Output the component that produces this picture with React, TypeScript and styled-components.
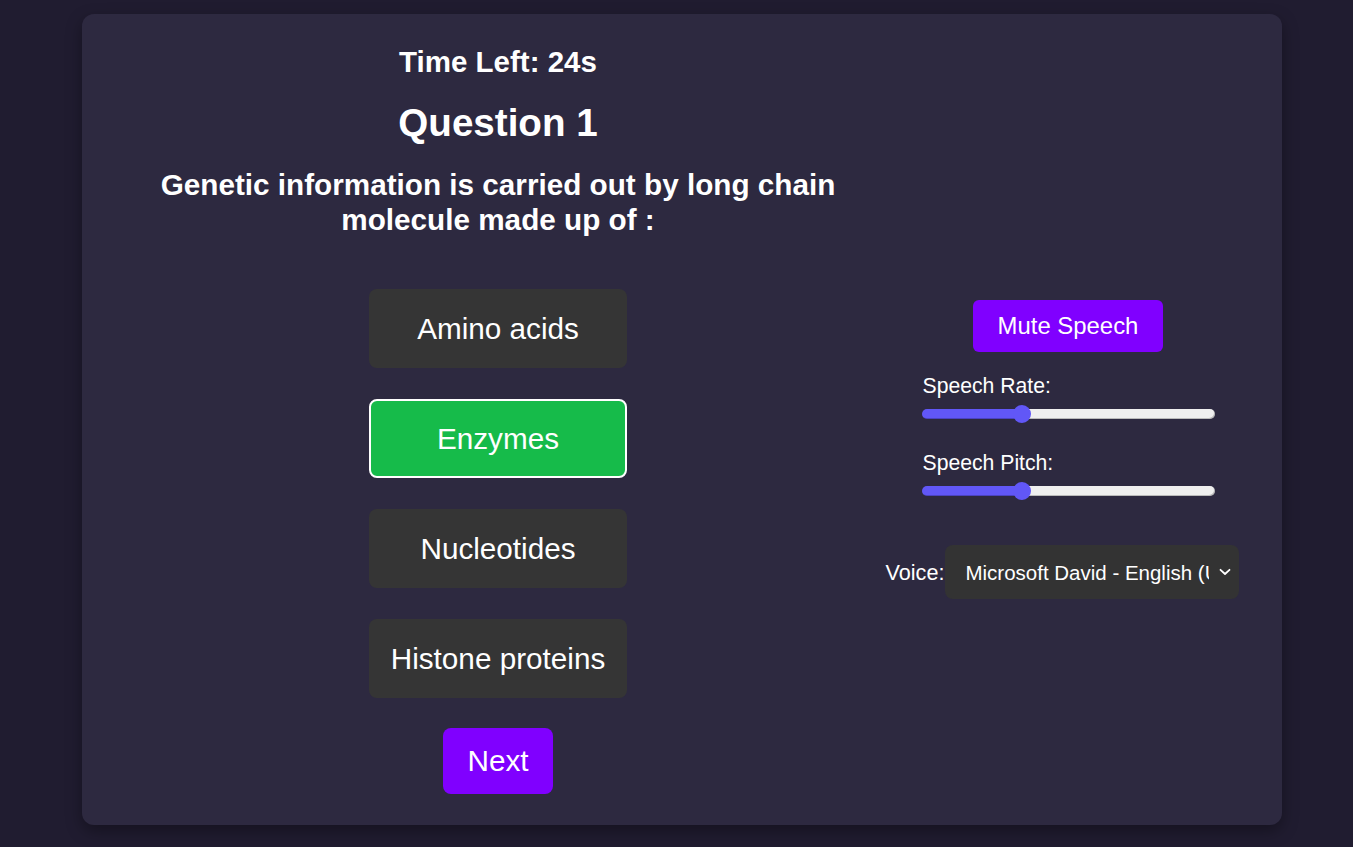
import React, { useState } from "react";
import styled, { createGlobalStyle } from "styled-components";

const GlobalStyle = createGlobalStyle`
  html, body {
    margin: 0;
    padding: 0;
    background: #201c30;
    font-family: "Liberation Sans", Arial, sans-serif;
    color: #ffffff;
  }
  * { box-sizing: border-box; }
`;

const Page = styled.div`
  min-height: 847px;
  padding: 14px 0 22px 82px;
`;

const Card = styled.div`
  width: 1200px;
  height: 811px;
  background: #2d2940;
  border-radius: 12px;
  box-shadow: 0 6px 16px rgba(0, 0, 0, 0.35);
  display: grid;
  grid-template-columns: 792px 348px;
  padding-left: 20px;
`;

const LeftColumn = styled.div`
  display: flex;
  flex-direction: column;
  align-items: center;
  padding-top: 31px;
`;

const Timer = styled.div`
  font-size: 29.5px;
  line-height: 34px;
  font-weight: 700;
`;

const QuestionTitle = styled.h2`
  margin: 22px 0 0;
  font-size: 38.6px;
  line-height: 44px;
  font-weight: 700;
`;

const QuestionText = styled.p`
  margin: 22px 0 0;
  font-size: 29.7px;
  line-height: 35px;
  font-weight: 700;
  text-align: center;
`;

const Answers = styled.div`
  margin-top: 52px;
  display: flex;
  flex-direction: column;
  gap: 31px;
`;

const AnswerButton = styled.button<{ $selected?: boolean }>`
  width: 258px;
  height: 79px;
  border-radius: 8px;
  border: ${(p) => (p.$selected ? "2px solid #ffffff" : "none")};
  background: ${(p) => (p.$selected ? "#16bb4a" : "#353535")};
  color: #ffffff;
  font-family: "Liberation Sans", Arial, sans-serif;
  font-size: 29.7px;
  line-height: 34px;
  padding: 0;
  cursor: pointer;
`;

const NextButton = styled.button`
  margin-top: 30px;
  height: 66px;
  padding: 0 24.5px;
  border: none;
  border-radius: 8px;
  background: #8000ff;
  color: #ffffff;
  font-family: "Liberation Sans", Arial, sans-serif;
  font-size: 29.7px;
  line-height: 34px;
  cursor: pointer;
`;

const RightColumn = styled.div`
  display: flex;
  flex-direction: column;
  align-items: center;
  padding-top: 286px;
`;

const MuteButton = styled.button`
  height: 52px;
  padding: 0 25px;
  border: none;
  border-radius: 6px;
  background: #8000ff;
  color: #ffffff;
  font-family: "Liberation Sans", Arial, sans-serif;
  font-size: 23.9px;
  line-height: 28px;
  cursor: pointer;
`;

const SliderGroup = styled.div<{ $top: number }>`
  width: 293px;
  margin-top: ${(p) => p.$top}px;
  display: flex;
  flex-direction: column;
  align-items: stretch;
`;

const SliderLabel = styled.label`
  font-size: 21.2px;
  line-height: 24px;
  padding-left: 1px;
`;

const Range = styled.input<{ $pct: number }>`
  -webkit-appearance: none;
  appearance: none;
  width: 293px;
  height: 18px;
  margin: 7px 0 0;
  background: transparent;
  cursor: pointer;

  &::-webkit-slider-runnable-track {
    height: 10px;
    border-radius: 5px;
    background: linear-gradient(
      to right,
      #6157f7 0%,
      #6157f7 ${(p) => p.$pct}%,
      #efefef ${(p) => p.$pct}%,
      #efefef 100%
    );
    box-shadow: inset -1px -1px 0 rgba(0, 0, 0, 0.22);
  }

  &::-webkit-slider-thumb {
    -webkit-appearance: none;
    appearance: none;
    width: 18px;
    height: 18px;
    margin-top: -4px;
    border-radius: 50%;
    background: #6157f7;
    border: none;
  }
`;

const VoiceRow = styled.div`
  margin-top: 45px;
  margin-right: 11px;
  display: flex;
  align-items: center;
  gap: 1px;
`;

const VoiceLabel = styled.label`
  font-size: 21.6px;
  line-height: 25px;
`;

const SelectWrap = styled.div`
  position: relative;
  width: 294px;
  height: 54px;
`;

const VoiceSelect = styled.select`
  -webkit-appearance: none;
  appearance: none;
  width: 100%;
  height: 100%;
  padding: 0 30px 0 20px;
  border: none;
  border-radius: 8px;
  background: #333333;
  color: #ffffff;
  font-family: "Liberation Sans", Arial, sans-serif;
  font-size: 20.5px;
  outline: none;
  cursor: pointer;
`;

const Chevron = styled.svg`
  position: absolute;
  right: 8px;
  top: 50%;
  width: 12px;
  height: 8px;
  margin-top: -4px;
  pointer-events: none;
`;

const answers = ["Amino acids", "Enzymes", "Nucleotides", "Histone proteins"];

export default function App() {
  const [selected, setSelected] = useState(1);
  const [rate, setRate] = useState(1);
  const [pitch, setPitch] = useState(1);

  const pct = (v: number) => ((v - 0.5) / 1.5) * 100;

  return (
    <>
      <GlobalStyle />
      <Page>
        <Card>
          <LeftColumn>
            <Timer>Time Left: 24s</Timer>
            <QuestionTitle>Question 1</QuestionTitle>
            <QuestionText>
              Genetic information is carried out by long chain molecule made up of :
            </QuestionText>
            <Answers>
              {answers.map((a, i) => (
                <AnswerButton
                  key={a}
                  $selected={i === selected}
                  onClick={() => setSelected(i)}
                >
                  {a}
                </AnswerButton>
              ))}
            </Answers>
            <NextButton>Next</NextButton>
          </LeftColumn>
          <RightColumn>
            <MuteButton>Mute Speech</MuteButton>
            <SliderGroup $top={22}>
              <SliderLabel>Speech Rate:</SliderLabel>
              <Range
                type="range"
                min={0.5}
                max={2}
                step={0.1}
                value={rate}
                $pct={pct(rate)}
                onChange={(e) => setRate(parseFloat(e.target.value))}
              />
            </SliderGroup>
            <SliderGroup $top={28}>
              <SliderLabel>Speech Pitch:</SliderLabel>
              <Range
                type="range"
                min={0.5}
                max={2}
                step={0.1}
                value={pitch}
                $pct={pct(pitch)}
                onChange={(e) => setPitch(parseFloat(e.target.value))}
              />
            </SliderGroup>
            <VoiceRow>
              <VoiceLabel>Voice:</VoiceLabel>
              <SelectWrap>
                <VoiceSelect defaultValue="david">
                  <option value="david">Microsoft David - English (United States)</option>
                  <option value="zira">Microsoft Zira - English (United States)</option>
                </VoiceSelect>
                <Chevron viewBox="0 0 12 8" fill="none">
                  <path
                    d="M1.5 1.8 L6 6 L10.5 1.8"
                    stroke="#ffffff"
                    strokeWidth="1.8"
                    strokeLinecap="round"
                    strokeLinejoin="round"
                  />
                </Chevron>
              </SelectWrap>
            </VoiceRow>
          </RightColumn>
        </Card>
      </Page>
    </>
  );
}
